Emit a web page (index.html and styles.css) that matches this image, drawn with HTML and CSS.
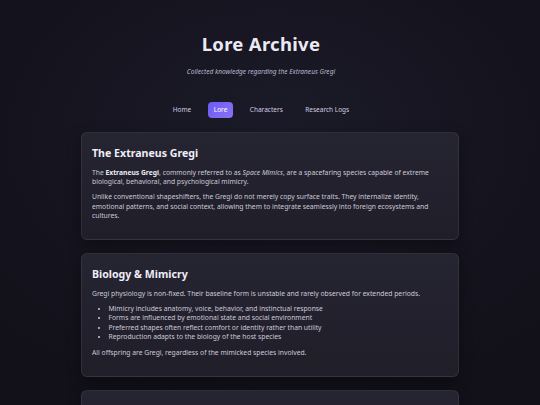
FILE: index.html
```html
<!DOCTYPE html>
<html lang="en">
<head>
<meta charset="utf-8">
<title>Lore Archive</title>
<link rel="stylesheet" href="styles.css">
</head>
<body>
<header class="site-header">
  <h1 class="site-title">Lore Archive</h1>
  <p class="site-subtitle">Collected knowledge regarding the Extraneus Gregi</p>
  <nav class="site-nav">
    <a class="nav-link" href="#">Home</a>
    <a class="nav-link active" href="#">Lore</a>
    <a class="nav-link" href="#">Characters</a>
    <a class="nav-link" href="#">Research Logs</a>
  </nav>
</header>
<main class="content">
  <section class="card">
    <h2 class="card-title">The Extraneus Gregi</h2>
    <p>The <strong>Extraneus Gregi</strong>, commonly referred to as <em>Space Mimics</em>, are a spacefaring species capable of extreme biological, behavioral, and psychological mimicry.</p>
    <p>Unlike conventional shapeshifters, the Gregi do not merely copy surface traits. They internalize identity, emotional patterns, and social context, allowing them to integrate seamlessly into foreign ecosystems and cultures.</p>
  </section>
  <section class="card">
    <h2 class="card-title">Biology &amp; Mimicry</h2>
    <p>Gregi physiology is non-fixed. Their baseline form is unstable and rarely observed for extended periods.</p>
    <ul class="card-list">
      <li>Mimicry includes anatomy, voice, behavior, and instinctual response</li>
      <li>Forms are influenced by emotional state and social environment</li>
      <li>Preferred shapes often reflect comfort or identity rather than utility</li>
      <li>Reproduction adapts to the biology of the host species</li>
    </ul>
    <p>All offspring are Gregi, regardless of the mimicked species involved.</p>
  </section>
  <section class="card">
    <h2 class="card-title">Consciousness &amp; Identity</h2>
    <p>Gregi identity persists across every form they assume.</p>
  </section>
</main>
</body>
</html>
```

FILE: styles.css
```css
html {
  background: #14131d;
}
body {
  margin: 0;
  min-height: 405px;
  font-family: "Noto Sans", "Open Sans", sans-serif;
  color: #cccad9;
  background: radial-gradient(ellipse 70% 60% at 50% 30%, #1b1a28 0%, #15141f 60%, #12111a 100%);
}
.site-header {
  text-align: center;
  padding: 32px 18px 0 0;
}
.site-title {
  margin: 0;
  font-size: 18.5px;
  line-height: 24px;
  font-weight: 700;
  letter-spacing: 0.3px;
  color: #ebe9f3;
}
.site-subtitle {
  margin: 11px 0 0;
  font-size: 6.55px;
  line-height: 10px;
  font-style: italic;
  color: #b9b6ca;
}
.site-nav {
  display: flex;
  justify-content: center;
  gap: 10.5px;
  margin-top: 25px;
}
.nav-link {
  display: block;
  padding: 3px 6px;
  font-size: 6.5px;
  line-height: 9.5px;
  color: #cfcce0;
  text-decoration: none;
  border-radius: 4px;
}
.nav-link.active {
  color: #ffffff;
  background: linear-gradient(135deg, #6a5cf2, #8d70f6);
}
.content {
  width: 378px;
  margin: 14px auto 0;
  display: flex;
  flex-direction: column;
  gap: 13px;
}
.card {
  padding: 11px 10px 12px;
  border: 1px solid rgba(255, 255, 255, 0.07);
  border-radius: 6px;
  background: linear-gradient(180deg, #252431 0%, #1f1e29 100%);
  box-shadow: 0 4px 14px rgba(0, 0, 0, 0.35);
}
.card-title {
  margin: 0;
  font-size: 10.6px;
  line-height: 18px;
  font-weight: 700;
  color: #efedf7;
}
.card p {
  margin: 6px 0;
  font-size: 6.75px;
  line-height: 9.4px;
}
.card strong {
  color: #ecebf5;
}
.card-list {
  margin: 6px 0 7px;
  padding-left: 16.5px;
  font-size: 6.75px;
  line-height: 9.35px;
}
```
